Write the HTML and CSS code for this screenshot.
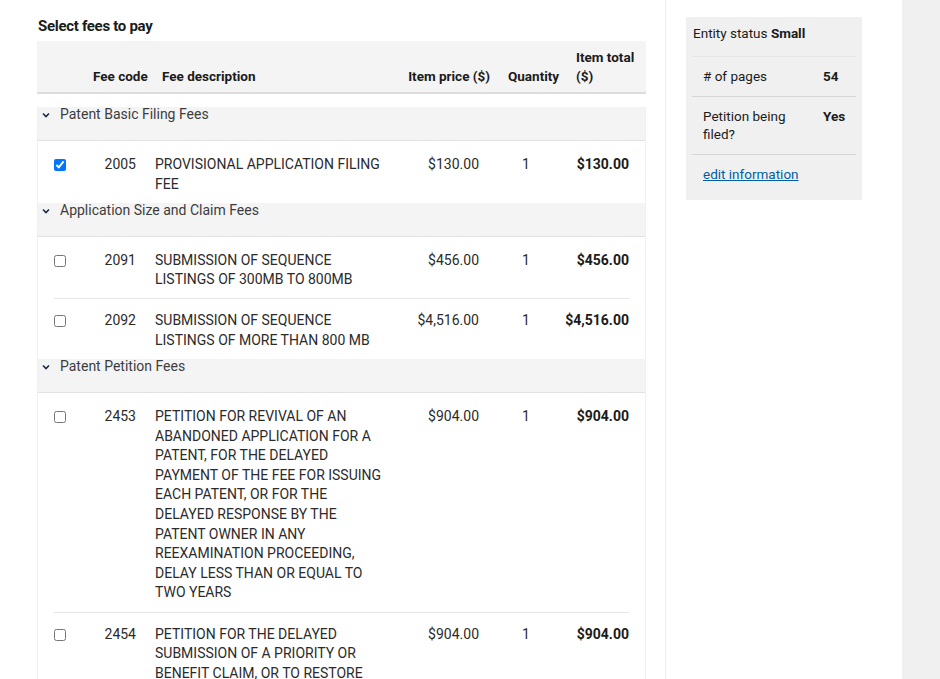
FILE: index.html
```html
<!DOCTYPE html>
<html lang="en">
<head>
    <meta charset="UTF-8">
    <meta name="viewport" content="width=device-width, initial-scale=1.0">
    <title>Select fees to pay</title>
    <link rel="stylesheet" href="styles.css">
</head>
<body>
    <div class="page">
        <main class="main">
            <h2 class="title">Select fees to pay</h2>

            <div class="fee-table">
                <div class="fee-head">
                    <span></span>
                    <span class="h-code">Fee code</span>
                    <span class="h-desc">Fee description</span>
                    <span class="h-price">Item price ($)</span>
                    <span class="h-qty">Quantity</span>
                    <span class="h-total">Item total ($)</span>
                </div>

                <div class="fee-body">
                    <div class="group">
                        <div class="group-title">
                            <svg class="chevron" width="8" height="6" viewBox="0 0 8 6"><path d="M1 1.5 L4 4.5 L7 1.5" fill="none" stroke="#1b2b45" stroke-width="1.6"/></svg>
                            Patent Basic Filing Fees
                        </div>
                        <div class="fee-row">
                            <input type="checkbox" class="check" checked>
                            <span class="code">2005</span>
                            <span class="desc">PROVISIONAL APPLICATION FILING FEE</span>
                            <span class="price">$130.00</span>
                            <span class="qty">1</span>
                            <span class="total">$130.00</span>
                        </div>
                    </div>

                    <div class="group">
                        <div class="group-title">
                            <svg class="chevron" width="8" height="6" viewBox="0 0 8 6"><path d="M1 1.5 L4 4.5 L7 1.5" fill="none" stroke="#1b2b45" stroke-width="1.6"/></svg>
                            Application Size and Claim Fees
                        </div>
                        <div class="fee-row">
                            <input type="checkbox" class="check">
                            <span class="code">2091</span>
                            <span class="desc">SUBMISSION OF SEQUENCE LISTINGS OF 300MB TO 800MB</span>
                            <span class="price">$456.00</span>
                            <span class="qty">1</span>
                            <span class="total">$456.00</span>
                        </div>
                        <div class="fee-row">
                            <input type="checkbox" class="check">
                            <span class="code">2092</span>
                            <span class="desc">SUBMISSION OF SEQUENCE LISTINGS OF MORE THAN 800 MB</span>
                            <span class="price">$4,516.00</span>
                            <span class="qty">1</span>
                            <span class="total">$4,516.00</span>
                        </div>
                    </div>

                    <div class="group">
                        <div class="group-title">
                            <svg class="chevron" width="8" height="6" viewBox="0 0 8 6"><path d="M1 1.5 L4 4.5 L7 1.5" fill="none" stroke="#1b2b45" stroke-width="1.6"/></svg>
                            Patent Petition Fees
                        </div>
                        <div class="fee-row">
                            <input type="checkbox" class="check">
                            <span class="code">2453</span>
                            <span class="desc">PETITION FOR REVIVAL OF AN ABANDONED APPLICATION FOR A PATENT, FOR THE DELAYED PAYMENT OF THE FEE FOR ISSUING EACH PATENT, OR FOR THE DELAYED RESPONSE BY THE PATENT OWNER IN ANY REEXAMINATION PROCEEDING, DELAY LESS THAN OR EQUAL TO TWO YEARS</span>
                            <span class="price">$904.00</span>
                            <span class="qty">1</span>
                            <span class="total">$904.00</span>
                        </div>
                        <div class="fee-row">
                            <input type="checkbox" class="check">
                            <span class="code">2454</span>
                            <span class="desc">PETITION FOR THE DELAYED SUBMISSION OF A PRIORITY OR BENEFIT CLAIM, OR TO RESTORE THE RIGHT OF PRIORITY OR BENEFIT</span>
                            <span class="price">$904.00</span>
                            <span class="qty">1</span>
                            <span class="total">$904.00</span>
                        </div>
                    </div>
                </div>
            </div>
        </main>

        <aside class="side">
            <div class="summary">
                <div class="entity">Entity status <strong>Small</strong></div>
                <div class="summary-row">
                    <span>#&nbsp;of pages</span>
                    <strong>54</strong>
                </div>
                <div class="summary-row">
                    <span>Petition being filed?</span>
                    <strong>Yes</strong>
                </div>
                <div class="summary-link">
                    <a href="#">edit information</a>
                </div>
            </div>
        </aside>

        <div class="rail"></div>
    </div>
</body>
</html>
```

FILE: styles.css
```css
body {
    margin: 0;
    font-family: Roboto, "Noto Sans", sans-serif;
    color: #1b1b1b;
    background-color: #fff;
    overflow: hidden;
}

.page {
    display: flex;
    min-height: 100vh;
}

/* Colonne principale */
.main {
    width: 609px;
    padding: 0 19px 0 37px;
    border-right: 1px solid #ececec;
}

.title {
    margin: 0;
    padding: 17px 0 6px 1px;
    font-size: 15px;
    line-height: 18px;
    font-weight: 700;
    letter-spacing: -0.3px;
}

/* En-tete du tableau */
.fee-head {
    display: grid;
    grid-template-columns: 56px 69px 1fr 100px 86px 70px;
    align-items: end;
    background-color: #f4f4f4;
    border-bottom: 2px solid #dcdcdc;
    padding: 7px 0 6px 0;
    font-size: 13.5px;
    line-height: 19px;
    font-weight: 700;
}

.h-price {
    text-align: right;
}

.h-qty {
    padding-left: 18px;
}

.h-total {
    padding-right: 10px;
}

.fee-body {
    margin-top: 13px;
    border-left: 1px solid #f0f0f0;
    border-right: 1px solid #f0f0f0;
}

.group-title {
    display: flex;
    align-items: flex-start;
    gap: 10px;
    height: 33px;
    padding-left: 4px;
    background-color: #f4f4f4;
    border-bottom: 1px solid #e2e2e2;
    font-size: 14px;
    line-height: 14px;
    color: #3d3d3d;
}

.chevron {
    margin-top: 5px;
}

/* Lignes de frais */
.fee-row {
    display: grid;
    grid-template-columns: 12px 70px 254px 89px 86px 64px;
    align-items: start;
    margin: 0 16px;
    padding: 12px 0 8.5px 0;
    border-top: 1px solid #e6e6e6;
    font-size: 14px;
    line-height: 19.6px;
    color: #2b2b2b;
}

.group-title + .fee-row {
    border-top: none;
    padding-top: 14px;
}

.check {
    margin: 4px 0 0 0;
    width: 12px;
    height: 12px;
}

.code {
    text-align: right;
}

.desc {
    padding: 0 6px 0 19px;
}

.price {
    text-align: right;
}

.qty {
    text-align: center;
    padding-left: 8px;
}

.total {
    text-align: right;
    font-weight: 700;
    color: #1b1b1b;
}

/* Panneau lateral */
.side {
    width: 215px;
    padding: 17px 0 0 20px;
}

.summary {
    width: 164px;
    background-color: #f0f0f0;
    padding: 6px 6px 17px 6px;
    font-size: 13.5px;
    line-height: 18px;
}

.entity {
    padding: 1px 0 14px 1px;
    border-bottom: 1px solid #e6e6e6;
}

.summary-row {
    display: grid;
    grid-template-columns: 100px 1fr;
    column-gap: 20px;
    padding: 10px 0 11px 11px;
    border-bottom: 1px solid #d6d6d6;
}

.summary-link {
    padding: 10px 0 0 11px;
}

.summary-link a {
    color: #005ea2;
}

.rail {
    flex: 1;
    margin-left: 1px;
    background-color: #f0f0f0;
}
```
